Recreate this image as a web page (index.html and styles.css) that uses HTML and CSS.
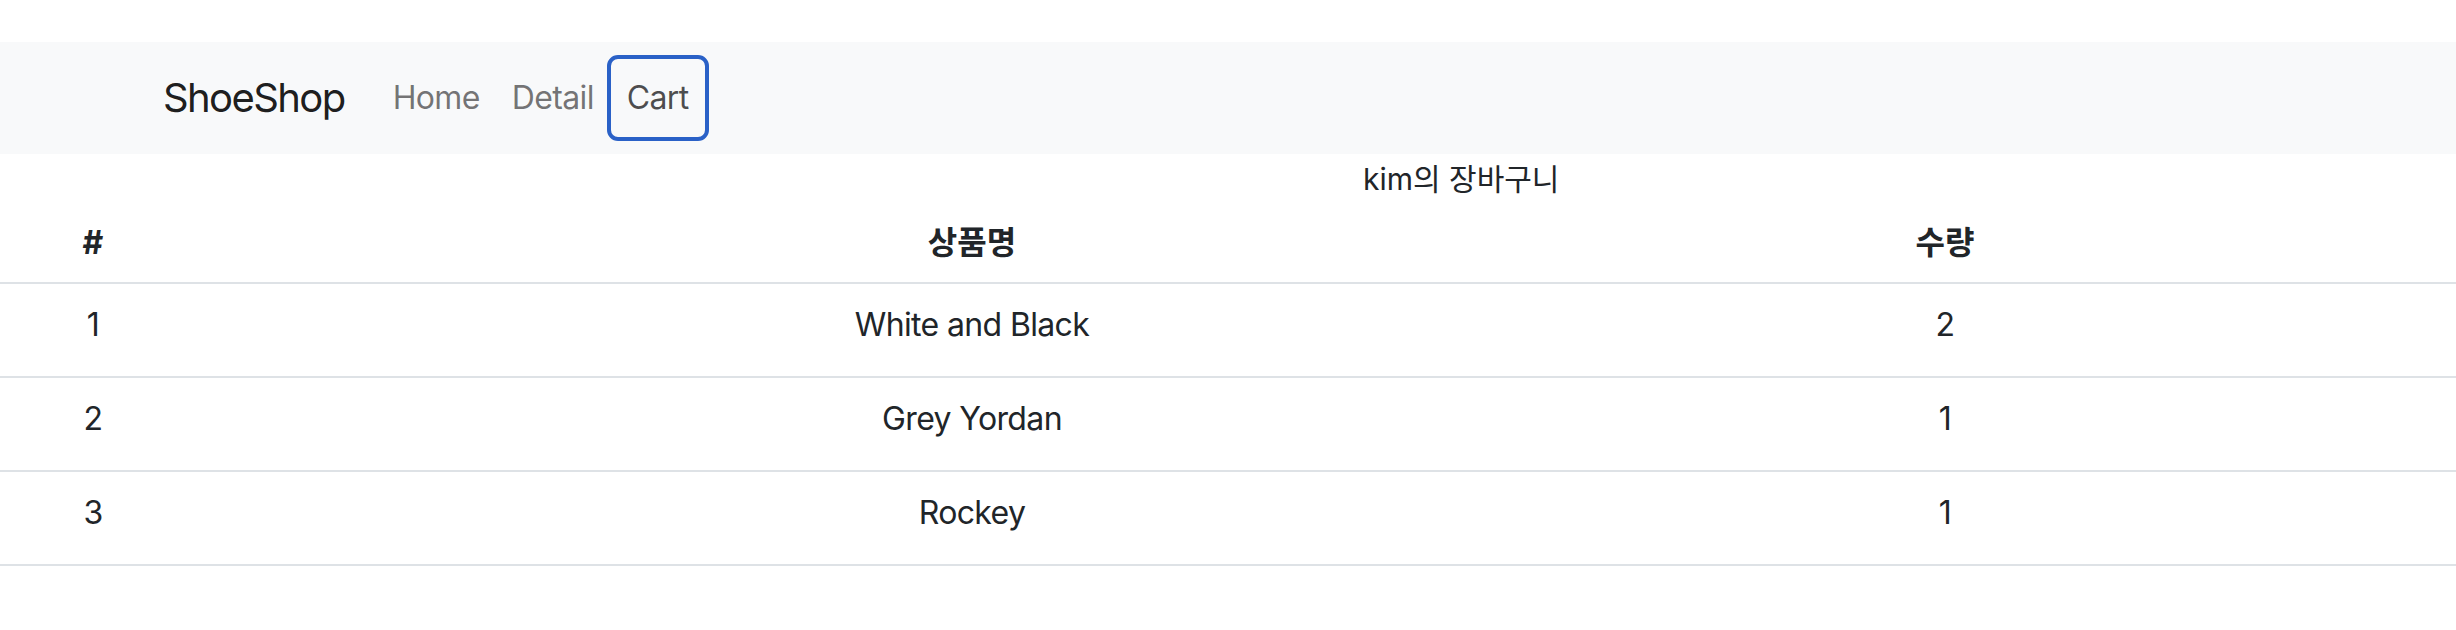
FILE: index.html
```html
<!DOCTYPE html>
<html lang="ko">
<head>
<meta charset="utf-8">
<title>ShoeShop</title>
<link rel="stylesheet" href="styles.css">
</head>
<body>
<div class="top-space"></div>
<nav class="navbar">
  <div class="nav-container">
    <a class="brand" href="#">ShoeShop</a>
    <div class="nav-links">
      <a class="nav-link" href="#">Home</a>
      <a class="nav-link" href="#">Detail</a>
      <a class="nav-link focused" href="#">Cart</a>
    </div>
  </div>
</nav>
<h6 class="cart-title">kim의 장바구니</h6>
<table class="cart-table">
  <colgroup>
    <col class="c1"><col class="c2"><col class="c3"><col class="c4">
  </colgroup>
  <thead>
    <tr><th>#</th><th>상품명</th><th>수량</th><th></th></tr>
  </thead>
  <tbody>
    <tr><td>1</td><td>White and Black</td><td>2</td><td></td></tr>
    <tr><td>2</td><td>Grey Yordan</td><td>1</td><td></td></tr>
    <tr><td>3</td><td>Rockey</td><td>1</td><td></td></tr>
  </tbody>
</table>
</body>
</html>
```
FILE: styles.css
```css
* { box-sizing: border-box; }
html, body {
  margin: 0;
  padding: 0;
  background: #fff;
}
body {
  font-family: "Inter", "Liberation Sans", "Noto Sans CJK KR", sans-serif;
  color: #212529;
  font-size: 32px;
  line-height: 1.5;
  letter-spacing: -0.02em;
}
.top-space { height: 42px; }
.navbar {
  background: #f8f9fa;
  height: 112px;
  padding: 16px 0;
}
.nav-container {
  display: flex;
  align-items: center;
  padding-left: 163px;
  height: 80px;
}
.brand {
  font-size: 40px;
  line-height: 60px;
  padding: 10px 0;
  margin-right: 32px;
  letter-spacing: -0.04em;
  color: rgba(0,0,0,.9);
  text-decoration: none;
}
.nav-links {
  display: flex;
  align-items: center;
}
.nav-link {
  display: block;
  padding: 16px 16px;
  line-height: 48px;
  font-size: 32px;
  color: rgba(0,0,0,.55);
  text-decoration: none;
}
.nav-link.focused {
  color: rgba(0,0,0,.7);
  padding: 16px 17px;
  outline: 4px solid #2a61c7;
  outline-offset: -1px;
  border-radius: 8px;
}
.cart-title {
  margin: 0;
  font-size: 30px;
  font-weight: 400;
  line-height: 50px;
  height: 50px;
  padding-left: 1363px;
  letter-spacing: 0;
}
.cart-table {
  width: 100%;
  border-collapse: collapse;
  table-layout: fixed;
}
.c1 { width: 186px; }
.c2 { width: 1572px; }
.c3 { width: 374px; }
.c4 { width: auto; }
.cart-table th,
.cart-table td {
  text-align: center;
  border-bottom: 2px solid #dee2e6;
  line-height: 48px;
}
.cart-table th {
  font-weight: 700;
  padding: 15px 0;
  letter-spacing: 0;
}
.cart-table td {
  padding: 17px 0 27px;
}
```
